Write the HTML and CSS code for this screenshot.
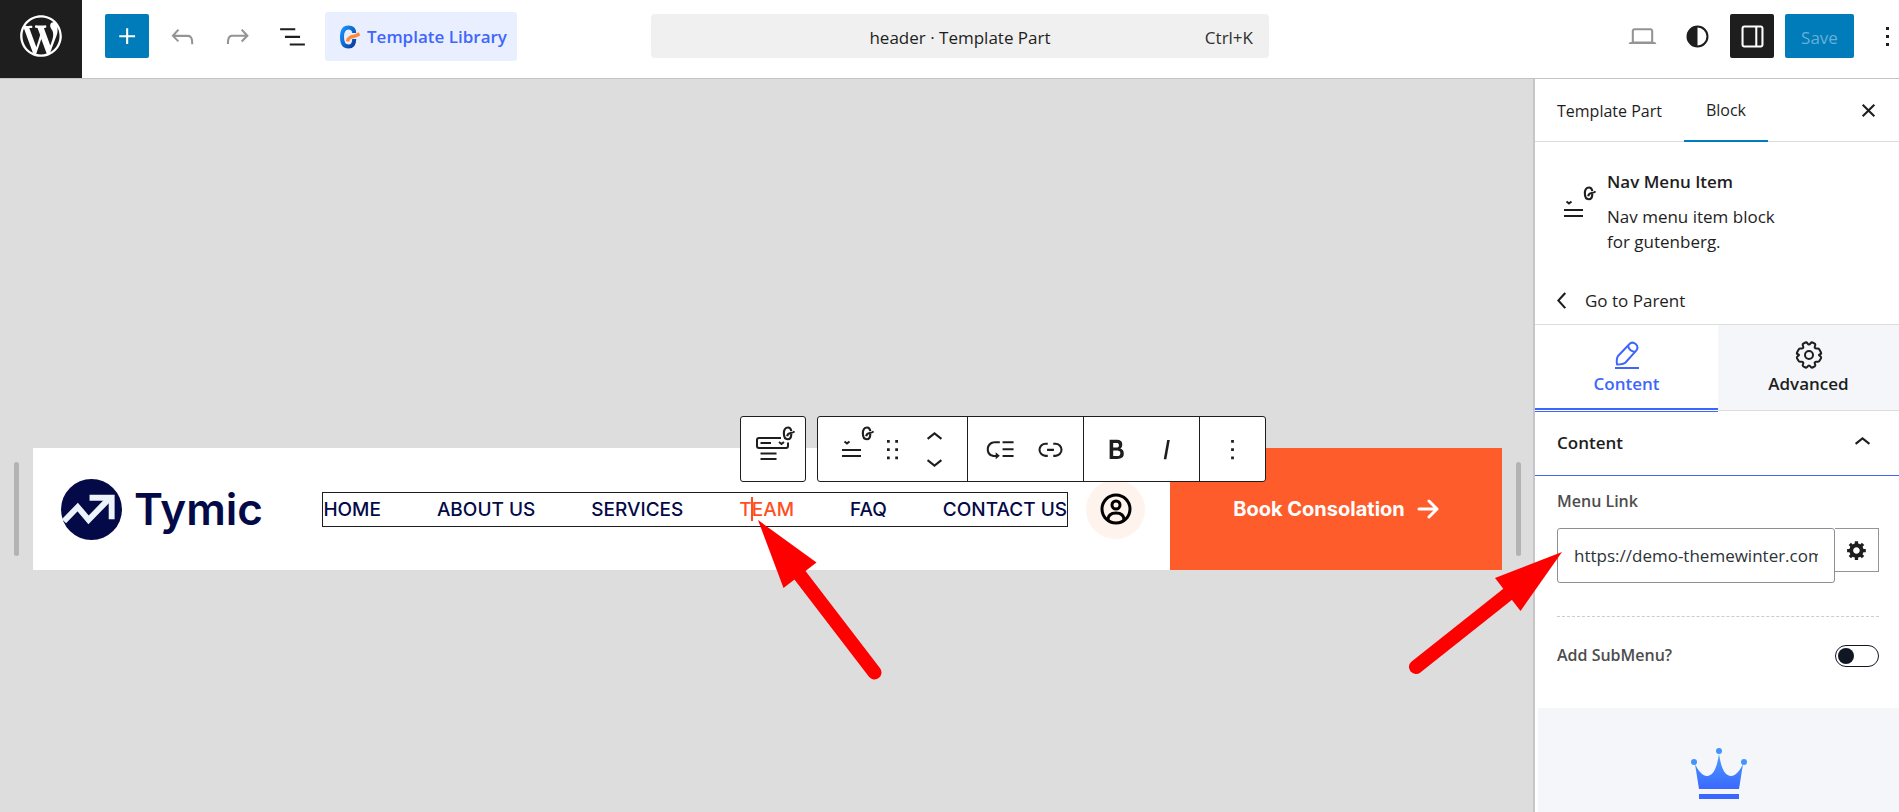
FILE: index.html
```html
<!DOCTYPE html>
<html lang="en">
<head>
  <meta charset="UTF-8" />
  <meta name="viewport" content="width=device-width, initial-scale=1.0"/>
  <title>header · Template Part | Editor</title>
  <link rel="stylesheet" href="styles.css">
</head>
<body>

<!-- shared icons -->
<svg class="sprite" aria-hidden="true">
  <symbol id="g-mark" viewBox="0 0 14 16">
    <path d="M10 5.500C9.700 2.700 8.600 1.500 6.500 1.500 3.500 1.500 2 3.800 2 7.800S3.500 14.200 6.200 14.200C8.800 14.200 10 12.300 10 8.500" fill="none" stroke="currentColor" stroke-width="2.300"/>
    <path d="M5.500 11c.4-2.400 1.800-3.200 4-3.500 2-.3 3-.8 4-1.800" fill="none" stroke="currentColor" stroke-width="2.200"/>
  </symbol>
  <symbol id="nav-item" viewBox="0 0 50 50">
    <path d="M17 26h19M17 32h19" stroke="currentColor" stroke-width="2"/>
    <path d="M19.500 17.500l2.500 2 2.500-2" fill="none" stroke="currentColor" stroke-width="2"/>
    <use href="#g-mark" x="36" y="2" width="13" height="15"/>
  </symbol>
</svg>

<header class="editor-header">
  <a class="site-logo" href="#" aria-label="View site">
    <svg viewBox="-2 -2 24 24"><path d="M20 10c0-5.510-4.490-10-10-10C4.480 0 0 4.490 0 10c0 5.520 4.480 10 10 10 5.510 0 10-4.480 10-10zM7.780 15.370L4.370 6.220c.55-.02 1.170-.08 1.170-.08.5-.06.44-1.130-.06-1.110 0 0-1.450.11-2.370.11-.18 0-.37 0-.58-.01C4.120 2.690 6.870 1.110 10 1.110c2.330 0 4.450.87 6.050 2.340-.68-.11-1.650.39-1.650 1.580 0 .74.45 1.360.9 2.100.35.61.55 1.360.55 2.460 0 1.490-1.400 5-1.400 5l-3.030-8.370c.54-.02.82-.17.82-.17.5-.05.44-1.250-.06-1.220 0 0-1.440.12-2.380.12-.87 0-2.330-.12-2.330-.12-.5-.03-.56 1.200-.06 1.220l.92.08 1.260 3.410zM17.410 10c.24-.64.74-1.870.43-4.250.7 1.290 1.050 2.710 1.050 4.250 0 3.290-1.730 6.240-4.400 7.780.97-2.590 1.940-5.200 2.920-7.780zM6.100 18.090C3.120 16.650 1.110 13.530 1.110 10c0-1.300.23-2.480.72-3.590C3.250 10.300 4.670 14.200 6.100 18.090zm4.030-6.630l2.580 6.980c-.86.29-1.760.45-2.710.45-.79 0-1.570-.11-2.290-.33.81-2.380 1.620-4.740 2.420-7.100z"/></svg>
  </a>

  <div class="header-tools">
    <button class="icon-btn primary" aria-label="Add block"><svg class="icon" viewBox="0 0 24 24"><path d="M11 12.500V17.500H12.500V12.500H17.500V11H12.500V6H11V11H6V12.500H11Z"/></svg></button>
    <button class="icon-btn muted" aria-label="Undo"><svg class="icon" viewBox="0 0 24 24"><path d="M18.300 11.700c-.6-.6-1.400-.9-2.300-.9H6.700l2.900-3.300-1.100-1-4.500 5L8.500 16l1-1-2.700-2.700H16c.5 0 .9.2 1.300.5 1 1 1 3.400 1 4.500v.3h1.500v-.2c0-1.500 0-4.300-1.500-5.700z"/></svg></button>
    <button class="icon-btn muted" aria-label="Redo"><svg class="icon" viewBox="0 0 24 24"><path d="M15.600 6.500l-1.100 1 2.900 3.300H8c-.9 0-1.700.3-2.300.9-1.400 1.500-1.400 4.200-1.400 5.600v.2h1.500v-.3c0-1.100 0-3.500 1-4.500.3-.3.7-.5 1.300-.5h9.200L14.500 15l1.100 1.100 4.600-4.600-4.600-5z"/></svg></button>
    <button class="icon-btn" aria-label="Document overview"><svg class="icon" viewBox="0 0 24 24"><path d="M3 6h11v1.500H3V6Zm3.500 5.500h11V13h-11v-1.500ZM21 17H10v1.500h11V17Z"/></svg></button>
    <button class="library-btn">
      <svg class="library-icon" viewBox="0 0 22 24">
        <defs><linearGradient id="gBlue" x1="0" y1="0" x2="1" y2="1"><stop offset="0" stop-color="#1593ff"/><stop offset="1" stop-color="#0a3d9e"/></linearGradient></defs>
        <path d="M15.200 8C15 4.500 13 2.500 9.500 2.500 5 2.500 3 6 3 12s2 9.500 6.500 9.500c4 0 5.700-3 5.700-7.500" fill="none" stroke="url(#gBlue)" stroke-width="4"/>
        <path d="M8.500 16.500c.8-4 3-4.700 6.500-5.200 2.500-.4 3.300-1.200 5.500-2.500" fill="none" stroke="#ff8a3c" stroke-width="3.600"/>
      </svg>
      Template Library
    </button>
  </div>

  <button class="command-bar">
    <span class="command-title">header · Template Part</span>
    <span class="command-key">Ctrl+K</span>
  </button>

  <div class="header-settings">
    <button class="icon-btn muted" aria-label="View"><svg class="icon" viewBox="0 0 24 24"><path d="M20.500 16h-.7V8c0-1.100-.9-2-2-2H6.200c-1.100 0-2 .9-2 2v8h-.7c-.8 0-1.500.7-1.500 1.500h20c0-.8-.7-1.500-1.500-1.500zM5.700 8c0-.3.2-.5.5-.5h11.600c.3 0 .5.2.5.5v7.600H5.700V8z"/></svg></button>
    <button class="icon-btn" aria-label="Styles"><svg class="icon" viewBox="0 0 24 24"><path fill-rule="evenodd" d="M20 12a8 8 0 11-16 0 8 8 0 0116 0zm-1.500 0a6.500 6.500 0 01-6.500 6.500v-13a6.500 6.500 0 016.500 6.500z"/></svg></button>
    <button class="icon-btn pressed" aria-label="Settings"><svg class="icon" viewBox="0 0 24 24"><path d="M18 4H6c-1.100 0-2 .9-2 2v12c0 1.100.9 2 2 2h12c1.100 0 2-.9 2-2V6c0-1.100-.9-2-2-2zm-4 14.500H6c-.3 0-.5-.2-.5-.5V6c0-.3.2-.5.5-.5h8v13zm4.500-.5c0 .3-.2.5-.5.5h-2.500v-13H18c.3 0 .5.2.5.5v12z"/></svg></button>
    <button class="save-btn">Save</button>
    <button class="more-btn" aria-label="Options"><svg viewBox="0 0 24 33"><path d="M11 7h3v3h-3zM11 15h3v3h-3zM11 23h3v3h-3z"/></svg></button>
  </div>
</header>

<div class="editor-body">
  <main class="canvas">
    <div class="resize-handle"></div>

    <div class="preview">
      <div class="site-header">
        <a class="brand" href="#">
          <svg viewBox="0 0 62 62">
            <circle cx="31" cy="31" r="31" fill="#030a47"/>
            <path d="M3 43L17 28.500l11 13L49 20" fill="none" stroke="#ecf3fb" stroke-width="6"/>
            <path d="M29 19h22.500v22" fill="none" stroke="#ecf3fb" stroke-width="6"/>
          </svg>
          Tymic
        </a>

        <nav class="site-nav">
          <a href="#">HOME</a>
          <a href="#">ABOUT US</a>
          <a href="#">SERVICES</a>
          <a class="active" href="#">TEAM
            <span class="caret"></span>
            <svg class="pointer pointer-team" viewBox="0 0 126 162"><path d="M1 1L26.500 69L59.500 43.500z" fill="#f00"/><path d="M42 55l75.500 98.500" stroke="#f00" stroke-width="14" stroke-linecap="round"/></svg>
          </a>
          <a href="#">FAQ</a>
          <a href="#">CONTACT US</a>
        </nav>

        <a class="account" href="#" aria-label="Account">
          <svg class="outline" viewBox="0 0 32 32" stroke-width="3"><circle cx="16" cy="16" r="14"/><circle cx="16" cy="12" r="4"/><path d="M8 27c0-4.500 3-7 8-7s8 2.500 8 7"/></svg>
        </a>

        <a class="book-btn" href="#">
          Book Consolation
          <svg class="outline" viewBox="0 0 22 20" stroke-width="3" stroke-linecap="round" stroke-linejoin="round"><path d="M2 10h18M12 2l8 8-8 8"/></svg>
        </a>
      </div>

      <div class="block-toolbar">
        <div class="toolbar-group">
          <button class="tool" aria-label="Select parent block">
            <svg class="block-icon outline" viewBox="0 0 50 50" stroke-width="2">
              <path d="M33 14H11q-2 0-2 2v6q0 2 2 2h27q2 0 2-2v-3.500"/>
              <path d="M12.500 19H23M12.500 29.500h16M12.500 35h16M31 18l2.500 2 2.500-2"/>
              <use href="#g-mark" x="34" y="2" width="13" height="15"/>
            </svg>
          </button>
        </div>
        <div class="toolbar-group">
          <div class="segment">
            <button class="tool" aria-label="Nav Menu Item"><svg class="block-icon"><use href="#nav-item"/></svg></button>
            <button class="tool drag" aria-label="Drag"><svg class="icon" viewBox="0 0 24 24"><path d="M8 7h2V5H8v2zm0 6h2v-2H8v2zm0 6h2v-2H8v2zm6-14v2h2V5h-2zm0 8h2v-2h-2v2zm0 6h2v-2h-2v2z"/></svg></button>
            <div class="movers">
              <button aria-label="Move up"><svg class="icon" viewBox="0 0 24 24"><path d="M6.500 12.400L12 8l5.500 4.400-.9 1.200L12 10l-4.500 3.600-1-1.200z"/></svg></button>
              <button aria-label="Move down"><svg class="icon" viewBox="0 0 24 24"><path d="M17.500 11.600L12 16l-5.500-4.400.9-1.200L12 14l4.500-3.600 1 1.200z"/></svg></button>
            </div>
          </div>
          <div class="segment">
            <button class="tool" aria-label="Add submenu"><svg class="icon" viewBox="0 0 24 24"><path d="M2 12c0 3.600 2.400 5.500 6 5.500h.5V19l3-2.500-3-2.500v2H8c-2.500 0-4.500-1.500-4.500-4s2-4.500 4.500-4.500h3.500V6H8c-3.600 0-6 2.400-6 6zm19.500-1h-8v1.500h8V11zm0 5h-8v1.500h8V16zm0-10h-8v1.500h8V6z"/></svg></button>
            <button class="tool" aria-label="Link"><svg class="icon" viewBox="0 0 24 24"><path d="M10 17.389H8.444A5.194 5.194 0 1 1 8.444 7H10v1.500H8.444a3.694 3.694 0 0 0 0 7.389H10v1.500ZM14 7h1.556a5.194 5.194 0 0 1 0 10.390H14v-1.500h1.556a3.694 3.694 0 0 0 0-7.390H14V7Zm-4.500 6h5v-1.500h-5V13Z"/></svg></button>
          </div>
          <div class="segment">
            <button class="tool" aria-label="Bold"><svg class="icon" viewBox="0 0 24 24"><path d="M14.700 11.300c1-.6 1.500-1.600 1.500-3 0-2.300-1.300-3.400-4-3.400H7v14h5.800c1.400 0 2.500-.3 3.300-1 .8-.7 1.200-1.700 1.200-2.900.1-1.900-.8-3.100-2.600-3.700zm-5.100-4h2.300c.6 0 1.100.1 1.400.4.3.3.5.7.5 1.200s-.2 1-.5 1.200c-.3.3-.8.4-1.400.4H9.600V7.300zm4.600 9c-.4.3-1 .4-1.700.4H9.600v-3.900h2.900c.7 0 1.300.2 1.700.5.4.3.6.8.6 1.500s-.2 1.200-.6 1.500z"/></svg></button>
            <button class="tool" aria-label="Italic"><svg class="icon" viewBox="0 0 24 24"><path d="M12.500 5L10 19h1.900l2.500-14z"/></svg></button>
          </div>
          <div class="segment">
            <button class="tool" aria-label="Options"><svg class="icon" viewBox="0 0 24 24"><path d="M13 19h-2v-2h2v2zm0-6h-2v-2h2v2zm0-6h-2V5h2v2z"/></svg></button>
          </div>
        </div>
      </div>
    </div>

    <div class="resize-handle"></div>
  </main>

  <aside class="sidebar">
    <div class="sidebar-tabs">
      <button class="tab">Template Part</button>
      <button class="tab active">Block</button>
      <button class="close-btn" aria-label="Close settings"><svg class="icon" viewBox="0 0 24 24"><path d="M12 13.060l3.712 3.713 1.061-1.060L13.061 12l3.712-3.712-1.060-1.060L12 10.938 8.288 7.227l-1.061 1.060L10.939 12l-3.712 3.712 1.060 1.061L12 13.061z"/></svg></button>
    </div>

    <div class="block-card">
      <svg class="block-icon"><use href="#nav-item"/></svg>
      <div>
        <h2>Nav Menu Item</h2>
        <p>Nav menu item block for gutenberg.</p>
      </div>
    </div>

    <button class="parent-link">
      <svg class="icon" viewBox="0 0 24 24"><path d="M14.600 7l-1.200-1L8 12l5.400 6 1.200-1-4.600-5z"/></svg>
      Go to Parent
    </button>

    <div class="panel-tabs">
      <button class="panel-tab active">
        <svg class="outline" viewBox="0 0 28 28" stroke-width="2" stroke-linejoin="round"><path d="M4 23.500c-.5-4-.4-6.500.8-8.200L16 3.500c2-2.200 4.500-2.300 6.700-.4 2.200 2 2.200 4.600.3 6.800L12.500 21.500c-2 1.800-4.500 2-8.500 2zM15 4.700c1 4 3 6 7.500 6"/><path d="M2 27h24"/></svg>
        Content
      </button>
      <button class="panel-tab">
        <svg class="outline" viewBox="0 0 28 28" stroke-width="2" stroke-linejoin="round"><circle cx="14" cy="14" r="4"/><path d="M10.500 1.500c2-.8 1.800 2 3.500 2s1.500-2.800 3.500-2l2.200 1.200c1.800 1.200-.8 2.600.2 4.200s3.200-.4 4.300 1.300l1.800 3.300c.8 2-2 1.500-2 2.500s2.800 1.200 2 3.200l-1.800 3c-1.100 1.600-3.300-.3-4.300 1.200s1.600 2.700-.2 3.900l-2.200 1.200c-2 .8-1.800-2-3.500-2s-1.500 2.800-3.500 2l-2.200-1.200c-1.800-1.200.8-2.400-.2-3.900s-3.200.4-4.300-1.200l-1.800-3c-.8-2 2-2.200 2-3.200s-2.800-.5-2-2.500l1.800-3.300c1.100-1.700 3.300.3 4.300-1.300s-1.600-3 .2-4.200z"/></svg>
        Advanced
      </button>
    </div>

    <button class="panel-heading">
      Content
      <svg class="icon" viewBox="0 0 24 24"><path d="M6.500 12.400L12 8l5.500 4.400-.9 1.200L12 10l-4.500 3.600-1-1.200z"/></svg>
    </button>

    <div class="panel-body">
      <label class="field-label" for="menuLink">Menu Link</label>
      <div class="link-field">
        <input type="text" id="menuLink" value="https://demo-themewinter.com/team">
        <button aria-label="Link settings"><svg viewBox="0 0 20 20"><path d="M18 12h-2.180c-.17.7-.44 1.350-.81 1.930l1.540 1.540-2.100 2.100-1.540-1.540c-.58.36-1.230.63-1.910.79V19H8v-2.180c-.68-.16-1.330-.43-1.910-.79l-1.540 1.540-2.120-2.120 1.540-1.540c-.36-.58-.63-1.230-.79-1.910H1V9.030h2.170c.16-.7.44-1.350.8-1.940L2.430 5.550l2.100-2.100 1.540 1.540c.58-.37 1.240-.64 1.930-.81V2h3v2.180c.68.16 1.330.43 1.910.79l1.540-1.540 2.120 2.120-1.540 1.540c.36.59.64 1.240.8 1.940H18V12zm-8.500 1.500c1.660 0 3-1.340 3-3s-1.340-3-3-3-3 1.340-3 3 1.340 3 3 3z"/></svg></button>
        <svg class="pointer pointer-link" viewBox="0 0 154 124"><path d="M153 1L86 27l25.500 33z" fill="#f00"/><path d="M99 43L7 116" stroke="#f00" stroke-width="14" stroke-linecap="round"/></svg>
      </div>

      <div class="toggle-row">
        <label class="field-label" for="subMenu">Add SubMenu?</label>
        <input class="toggle" type="checkbox" id="subMenu">
      </div>
    </div>

    <div class="promo">
      <svg viewBox="0 0 56 52">
        <defs><linearGradient id="crown" x1="0" y1="0" x2="0" y2="1"><stop offset="0" stop-color="#4a9bff"/><stop offset="1" stop-color="#3b68ff"/></linearGradient></defs>
        <path d="M4 16c3 6 7 12 12 12 6 0 10-8 12-22 2 14 6 22 12 22 5 0 9-6 12-12l-4 25H8z" fill="url(#crown)"/>
        <g fill="#4593ff"><circle cx="28" cy="3" r="3"/><circle cx="3" cy="14" r="3"/><circle cx="53" cy="14" r="3"/></g>
        <path d="M8 46h40v5H8z" fill="#3b68ff"/>
      </svg>
    </div>
  </aside>
</div>

</body>
</html>
```
FILE: styles.css
```css
* {
  box-sizing: border-box;
  margin: 0;
  padding: 0;
}

body {
  display: flex;
  flex-direction: column;
  height: 100vh;
  overflow: hidden;
  font-family: "Open Sans", "Noto Sans", sans-serif;
  font-size: 17px;
  line-height: 25px;
  color: #1e1e1e;
  background-color: #fff;
}

button {
  font: inherit;
  color: inherit;
  background: none;
  border: none;
  cursor: pointer;
}

a {
  color: inherit;
  text-decoration: none;
}

svg {
  display: block;
  flex: none;
  fill: currentColor;
}

.outline {
  fill: none;
  stroke: currentColor;
}

.sprite {
  position: absolute;
  width: 0;
  height: 0;
}

.icon {
  width: 33px;
  height: 33px;
}

.block-icon {
  width: 50px;
  height: 50px;
}

/* top bar */
.editor-header {
  display: grid;
  grid-template-columns: 82px 1fr 618px 630px;
  border-bottom: 1px solid #c4c4c4;
}

.site-logo {
  display: flex;
  justify-content: center;
  height: 78px;
  padding-top: 11px;
  color: #fff;
  background-color: #1e1e1e;
}

.site-logo svg {
  width: 50px;
  height: 50px;
}

.header-tools,
.header-settings {
  display: flex;
  align-items: center;
  gap: 11px;
  height: 72px;
}

.header-tools {
  padding-left: 23px;
}

.header-settings {
  justify-content: flex-end;
}

.icon-btn {
  display: flex;
  align-items: center;
  justify-content: center;
  width: 44px;
  height: 44px;
  border-radius: 2px;
}

.icon-btn.primary {
  color: #fff;
  background-color: #007cba;
}

.icon-btn.muted {
  color: #949494;
}

.icon-btn.pressed {
  color: #fff;
  background-color: #1e1e1e;
}

.library-btn {
  display: flex;
  align-items: center;
  gap: 6px;
  height: 49px;
  padding: 1px 10px 0 14px;
  font-weight: 600;
  white-space: nowrap;
  color: #3f66fb;
  background-color: #e9effe;
  border-radius: 3px;
}

.library-icon {
  width: 22px;
  height: 24px;
}

.command-bar {
  display: grid;
  grid-template-columns: 1fr auto 1fr;
  align-items: center;
  height: 44px;
  margin-top: 14px;
  padding: 2px 16px 0;
  background-color: #f0f0f0;
  border-radius: 4px;
}

.command-title {
  grid-column: 2;
}

.command-key {
  justify-self: end;
  color: #2f2f2f;
}

.save-btn {
  width: 69px;
  height: 44px;
  padding-top: 2px;
  color: #66b0d6;
  background-color: #007cba;
  border-radius: 2px;
}

.more-btn {
  display: flex;
  justify-content: flex-end;
  width: 34px;
}

.more-btn svg {
  width: 24px;
  height: 33px;
}

/* canvas */
.editor-body {
  display: flex;
  flex: 1;
  min-height: 0;
}

.canvas {
  display: flex;
  flex: 1;
  align-items: flex-start;
  gap: 14px;
  padding: 369px 12px 0 14px;
  background-color: #ddd;
}

.resize-handle {
  width: 5px;
  height: 94px;
  margin-top: 14px;
  background-color: #b3b3b3;
  border-radius: 3px;
}

.preview {
  position: relative;
  flex: 1;
}

.site-header {
  display: flex;
  align-items: center;
  height: 122px;
  padding-left: 28px;
  background-color: #fff;
}

.brand {
  display: flex;
  flex: 1;
  align-items: center;
  gap: 12px;
  font-family: Inter, sans-serif;
  font-size: 44px;
  font-weight: 600;
  line-height: 60px;
  color: #030a47;
}

.brand svg {
  width: 61px;
  height: 61px;
}

.site-nav {
  display: flex;
  gap: 56px;
  padding: 4px 0;
  font-family: Inter, sans-serif;
  font-size: 19px;
  font-weight: 500;
  color: #030a47;
  border: 1px solid #1e1e1e;
}

.site-nav a {
  position: relative;
  white-space: nowrap;
}

.site-nav .active {
  color: #ff4f1f;
}

.caret {
  position: absolute;
  top: 0;
  left: 12px;
  width: 2px;
  height: 24px;
  background-color: #ff4f1f;
}

.pointer {
  position: absolute;
  z-index: 2;
}

.pointer-team {
  top: 22px;
  left: 18px;
  width: 126px;
  height: 162px;
}

.account {
  display: flex;
  align-items: center;
  justify-content: center;
  width: 59px;
  height: 59px;
  margin: 0 25px 0 18px;
  color: #000;
  background-color: #fff3ed;
  border-radius: 50%;
}

.account svg {
  width: 32px;
  height: 32px;
}

.book-btn {
  display: flex;
  align-items: center;
  justify-content: center;
  gap: 12px;
  width: 332px;
  height: 122px;
  font-family: Inter, sans-serif;
  font-size: 20px;
  font-weight: 700;
  color: #fff;
  background-color: #ff5c2c;
}

.book-btn svg {
  width: 22px;
  height: 20px;
}

/* floating block toolbar */
.block-toolbar {
  position: absolute;
  top: -32px;
  left: 707px;
  display: flex;
  gap: 11px;
}

.toolbar-group {
  display: flex;
  height: 66px;
  background-color: #fff;
  border: 1px solid #1e1e1e;
  border-radius: 3px;
}

.segment {
  display: flex;
  padding: 0 8px 0 7px;
}

.segment + .segment {
  border-left: 1px solid #1e1e1e;
}

.toolbar-group > .tool {
  margin: 0 7px;
}

.tool {
  display: flex;
  align-items: center;
  justify-content: center;
  width: 50px;
  height: 64px;
}

.tool.drag {
  width: 34px;
}

.movers {
  display: flex;
  flex-direction: column;
  width: 50px;
  padding: 8px 0;
}

.movers button {
  display: flex;
  align-items: center;
  justify-content: center;
  height: 24px;
}

/* sidebar */
.sidebar {
  display: flex;
  flex-direction: column;
  width: 366px;
  background-color: #fff;
  border-left: 2px solid #c6c6c6;
}

.sidebar-tabs {
  display: flex;
  height: 63px;
  border-bottom: 1px solid #ddd;
}

.tab {
  padding: 2px 22px 0;
  font-size: 16px;
}

.tab.active {
  height: 63px;
  border-bottom: 2px solid #007cba;
}

.close-btn {
  display: flex;
  align-items: center;
  margin-left: auto;
  padding: 0 14px;
}

.block-card {
  display: flex;
  gap: 10px;
  padding: 27px 22px 0 12px;
}

.block-card .block-icon {
  margin-top: 15px;
}

.block-card h2 {
  margin-bottom: 10px;
  font-size: 17px;
  font-weight: 600;
}

.block-card p {
  max-width: 180px;
}

.parent-link {
  display: flex;
  align-items: center;
  gap: 6px;
  margin: 30px 0 7px;
  padding-left: 11px;
}

.panel-tabs {
  display: grid;
  grid-template-columns: 183px 1fr;
  align-items: start;
  border-top: 1px solid #ddd;
}

.panel-tab {
  display: flex;
  flex-direction: column;
  align-items: center;
  gap: 2px;
  height: 86px;
  padding-top: 16px;
  font-weight: 600;
  background-color: #f4f6fa;
  border-bottom: 1px solid #ddd;
}

.panel-tab.active {
  height: 87px;
  color: #3f66fb;
  background-color: #fff;
  border-bottom-color: #3f66fb;
  box-shadow: inset 0 -1px #fff, inset 0 -3px #3f66fb;
}

.panel-tab svg {
  width: 28px;
  height: 28px;
}

.panel-heading {
  display: flex;
  align-items: center;
  justify-content: space-between;
  width: 100%;
  height: 64px;
  padding: 0 20px 2px 22px;
  font-weight: 600;
  border-bottom: 1px solid #3f66fb;
}

.panel-body {
  padding: 12px 20px 0 22px;
}

.field-label {
  font-size: 16px;
  font-weight: 600;
  color: #4d4d4d;
}

.link-field {
  position: relative;
  display: flex;
  align-items: flex-start;
  margin-top: 14px;
}

.link-field input {
  flex: 1;
  min-width: 0;
  height: 55px;
  padding: 0 16px;
  font: inherit;
  color: #2c3338;
  border: 1px solid #8c8f94;
  border-radius: 3px;
}

.link-field button {
  display: flex;
  align-items: center;
  justify-content: center;
  width: 44px;
  height: 44px;
  border: 1px solid #949494;
  border-left: none;
}

.link-field button svg {
  width: 22px;
  height: 22px;
}

.pointer-link {
  top: 23px;
  left: -148px;
  width: 154px;
  height: 124px;
}

.toggle-row {
  display: flex;
  align-items: center;
  justify-content: space-between;
  margin-top: 33px;
  padding: 26px 0 40px;
  border-top: 1px dashed #ccc;
}

.toggle {
  appearance: none;
  width: 44px;
  height: 22px;
  padding: 2px;
  border: 1px solid #101623;
  border-radius: 11px;
}

.toggle::before {
  content: "";
  display: block;
  width: 16px;
  height: 16px;
  background-color: #101623;
  border-radius: 50%;
}

.promo {
  display: flex;
  flex: 1;
  justify-content: center;
  margin-left: 3px;
  padding-top: 40px;
  background-color: #f4f6fa;
}

.promo svg {
  width: 56px;
  height: 52px;
}
```
